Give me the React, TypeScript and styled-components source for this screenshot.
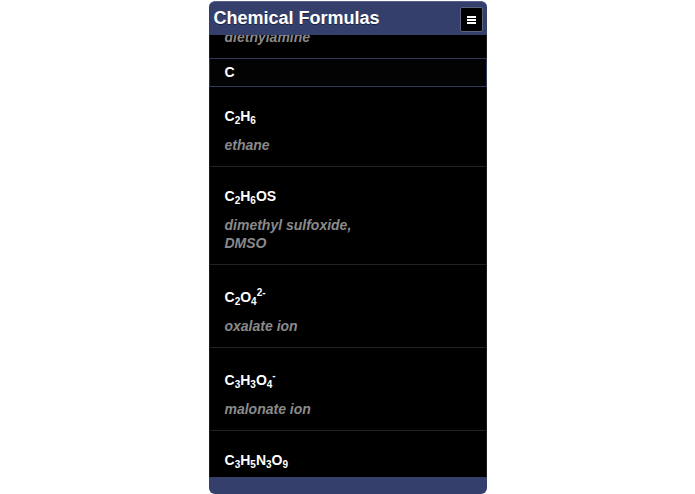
import styled, { createGlobalStyle } from "styled-components";

const GlobalStyle = createGlobalStyle`
  html, body {
    margin: 0;
    padding: 0;
    background: #fff;
  }
  * {
    box-sizing: border-box;
  }
`;

const Frame = styled.div`
  width: 278px;
  height: 100vh;
  margin: 0 auto;
  padding-top: 1px;
  display: flex;
  flex-direction: column;
  font-family: "Liberation Sans", Arial, Helvetica, sans-serif;
`;

const Header = styled.header`
  flex: 0 0 34px;
  display: flex;
  align-items: center;
  justify-content: space-between;
  padding: 0 4px 0 5px;
  background: #34406b;
  border-top: 1px solid #56618c;
  border-radius: 6px 6px 0 0;
`;

const Title = styled.h1`
  margin: 0;
  font-size: 18px;
  font-weight: bold;
  color: #fff;
  text-shadow: 0 1px 0 #1a2140;
`;

const MenuButton = styled.button`
  width: 23px;
  height: 25px;
  padding: 0;
  margin-top: 2px;
  display: flex;
  align-items: center;
  justify-content: center;
  background: #000;
  border: 1px solid #5b6280;
  border-radius: 2px;
  cursor: pointer;
`;

const Scroller = styled.main`
  flex: 1;
  overflow: hidden;
  background: #000;
`;

// the list is scrolled: the top of the first row sits under the header
const List = styled.ul<{ $offset: number }>`
  list-style: none;
  margin: -${(p) => p.$offset}px 0 0;
  padding: 0;
`;

const Divider = styled.li`
  height: 29px;
  padding: 0 15px;
  line-height: 27px;
  font-size: 14px;
  font-weight: bold;
  color: #fff;
  background: #030303;
  border: 1px solid #30375a;
`;

const Item = styled.li`
  padding: 19px 15px 12px;
  border-top: 1px solid #222;
  border-left: 1px solid #1a1a1a;
  border-right: 1px solid #1a1a1a;

  ${Divider} + & {
    border-top: none;
  }
`;

const Formula = styled.div`
  font-size: 14px;
  line-height: 20px;
  font-weight: bold;
  color: #fff;

  sub {
    font-size: 10px;
    line-height: 10px;
    vertical-align: -3px;
  }

  sup {
    font-size: 10px;
    line-height: 18px;
    vertical-align: 6px;
  }
`;

const Name = styled.p`
  margin: 10px 0 0;
  font-size: 14px;
  line-height: 18px;
  font-weight: bold;
  font-style: italic;
  color: #8a8a8a;
  white-space: pre-line;
`;

const Footer = styled.footer`
  flex: 0 0 17px;
  background: #34406b;
  border-radius: 0 0 6px 6px;
`;

type Entry =
  | { kind: "divider"; label: string }
  | { kind: "item"; formula?: string; charge?: string; name: string };

// first row is only the tail of the previous entry, scrolled past its formula
const entries: Entry[] = [
  { kind: "item", name: "diethylamine" },
  { kind: "divider", label: "C" },
  { kind: "item", formula: "C2H6", name: "ethane" },
  { kind: "item", formula: "C2H6OS", name: "dimethyl sulfoxide,\nDMSO" },
  { kind: "item", formula: "C2O4", charge: "2-", name: "oxalate ion" },
  { kind: "item", formula: "C3H3O4", charge: "-", name: "malonate ion" },
  { kind: "item", formula: "C3H5N3O9", name: "nitroglycerin" },
];

function renderFormula(formula: string, charge?: string) {
  const parts = Array.from(formula.matchAll(/([A-Z][a-z]?)(\d*)/g));
  return (
    <>
      {parts.map((m, i) => (
        <span key={i}>
          {m[1]}
          {m[2] && <sub>{m[2]}</sub>}
        </span>
      ))}
      {charge && <sup>{charge}</sup>}
    </>
  );
}

function MenuIcon() {
  return (
    <svg width="9" height="8" viewBox="0 0 9 8">
      <rect x="0" y="0" width="9" height="2" fill="#fff" />
      <rect x="0" y="3" width="9" height="2" fill="#fff" />
      <rect x="0" y="6" width="9" height="2" fill="#fff" />
    </svg>
  );
}

export default function App() {
  return (
    <>
      <GlobalStyle />
      <Frame>
        <Header>
          <Title>Chemical Formulas</Title>
          <MenuButton aria-label="menu">
            <MenuIcon />
          </MenuButton>
        </Header>
        <Scroller>
          <List $offset={37}>
            {entries.map((e, idx) =>
              e.kind === "divider" ? (
                <Divider key={idx}>{e.label}</Divider>
              ) : (
                <Item key={idx}>
                  {e.formula && (
                    <Formula>{renderFormula(e.formula, e.charge)}</Formula>
                  )}
                  <Name>{e.name}</Name>
                </Item>
              )
            )}
          </List>
        </Scroller>
        <Footer />
      </Frame>
    </>
  );
}
